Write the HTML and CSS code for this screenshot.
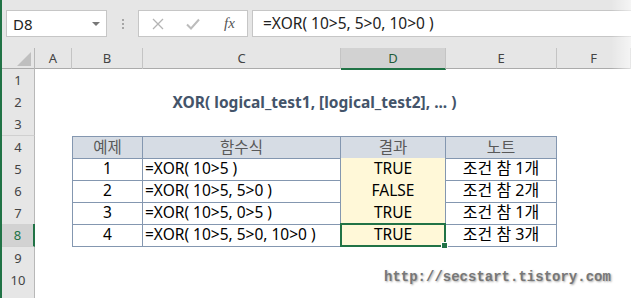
FILE: index.html
```html
<!DOCTYPE html>
<html lang="ko">
<head>
    <meta charset="UTF-8">
    <title>XOR 함수</title>
    <link rel="stylesheet" href="styles.css">
</head>
<body>
    <div class="app">
        <div class="topbar">
            <div class="namebox">
                <span>D8</span>
                <span class="caret"></span>
            </div>
            <div class="grip"><i></i><i></i><i></i></div>
            <div class="fbtns">
                <svg width="12" height="12" viewBox="0 0 12 12"><path d="M1 1L11 11M11 1L1 11" stroke="#b4b4b4" stroke-width="1.3" fill="none"/></svg>
                <svg width="14" height="12" viewBox="0 0 14 12"><path d="M1 6.5L5 10.5L13 1.5" stroke="#bcbcbc" stroke-width="2" fill="none"/></svg>
                <span class="fx">fx</span>
            </div>
            <div class="finput">=XOR( 10&gt;5, 5&gt;0, 10&gt;0 )</div>
        </div>

        <div class="sheet">
            <div class="row colhead">
                <div class="corner"><svg width="14" height="14" viewBox="0 0 14 14"><path d="M14 0L14 14L0 14Z" fill="#bfbfbf"/></svg></div>
                <div class="ch">A</div>
                <div class="ch">B</div>
                <div class="ch">C</div>
                <div class="ch sel">D</div>
                <div class="ch">E</div>
                <div class="ch">F</div>
            </div>
            <div class="row"><div class="rh">1</div></div>
            <div class="row">
                <div class="rh">2</div>
                <div></div>
                <div class="title">XOR( logical_test1, [logical_test2], ... )</div>
            </div>
            <div class="row"><div class="rh">3</div></div>
            <div class="row">
                <div class="rh">4</div>
                <div></div>
                <div class="c th first top">예제</div>
                <div class="c th top">함수식</div>
                <div class="c th top">결과</div>
                <div class="c th top">노트</div>
            </div>
            <div class="row">
                <div class="rh">5</div>
                <div></div>
                <div class="c first">1</div>
                <div class="c left">=XOR( 10&gt;5 )</div>
                <div class="c res">TRUE</div>
                <div class="c note">조건 참 1개</div>
            </div>
            <div class="row">
                <div class="rh">6</div>
                <div></div>
                <div class="c first">2</div>
                <div class="c left">=XOR( 10&gt;5, 5&gt;0 )</div>
                <div class="c res">FALSE</div>
                <div class="c note">조건 참 2개</div>
            </div>
            <div class="row">
                <div class="rh">7</div>
                <div></div>
                <div class="c first">3</div>
                <div class="c left">=XOR( 10&gt;5, 0&gt;5 )</div>
                <div class="c res">TRUE</div>
                <div class="c note">조건 참 1개</div>
            </div>
            <div class="row">
                <div class="rh sel">8</div>
                <div></div>
                <div class="c first">4</div>
                <div class="c left">=XOR( 10&gt;5, 5&gt;0, 10&gt;0 )</div>
                <div class="c res active">TRUE<span class="handle"></span></div>
                <div class="c note">조건 참 3개</div>
            </div>
            <div class="row"><div class="rh">9</div></div>
            <div class="row"><div class="rh">10</div></div>
            <div class="row"><div class="rh"></div></div>
        </div>

        <div class="watermark">http://secstart.tistory.com</div>
        <div class="fade"></div>
    </div>
</body>
</html>
```

FILE: styles.css
```css
html, body {
    margin: 0;
    padding: 0;
    background: #fff;
}
body {
    font-family: "Noto Sans", "Noto Sans CJK KR", sans-serif;
    color: #000;
    overflow: hidden;
}
.app {
    position: relative;
    width: 631px;
    height: 298px;
    border-left: 2px solid #217346;
    box-sizing: border-box;
    overflow: hidden;
}

/* formula bar */
.topbar {
    height: 48px;
    background: #e6e6e6;
    display: flex;
    align-items: flex-start;
    padding: 10px 0 0 4px;
    box-sizing: border-box;
}
.namebox {
    width: 101px;
    height: 27px;
    background: #fff;
    border: 1px solid #c6c6c6;
    box-sizing: border-box;
    display: flex;
    align-items: center;
    justify-content: space-between;
    padding: 0 6px 0 6px;
    font-size: 15px;
    color: #222;
}
.caret {
    width: 0;
    height: 0;
    border-left: 4px solid transparent;
    border-right: 4px solid transparent;
    border-top: 4px solid #777;
}
.grip {
    width: 31px;
    height: 27px;
    display: flex;
    flex-direction: column;
    align-items: center;
    justify-content: center;
    gap: 2px;
}
.grip i {
    width: 2px;
    height: 2px;
    background: #a6a6a6;
}
.fbtns {
    width: 110px;
    height: 27px;
    background: #fff;
    border: 1px solid #c6c6c6;
    box-sizing: border-box;
    display: flex;
    align-items: center;
    padding-left: 13px;
    gap: 22px;
}
.fx {
    font-family: "Liberation Serif", serif;
    font-style: italic;
    font-size: 15px;
    color: #555;
    margin-left: 2px;
}
.finput {
    flex: 1;
    margin-left: 4px;
    height: 27px;
    background: #fff;
    border: 1px solid #c6c6c6;
    border-right: none;
    box-sizing: border-box;
    padding-left: 10px;
    font-size: 15.5px;
    line-height: 25px;
    color: #222;
}

/* grid */
.row {
    display: grid;
    grid-template-columns: 33px 37px 71px 198px 105px 111px 1fr;
    height: 22.2px;
}
.colhead {
    height: 21px;
    background: #e6e6e6;
    border-bottom: 1px solid #ababab;
    box-sizing: border-box;
}
.corner {
    display: flex;
    align-items: flex-end;
    justify-content: flex-end;
    padding: 0 3px 3px 0;
    border-right: 1px solid #b8b8b8;
}
.ch {
    text-align: center;
    font-size: 13px;
    line-height: 20px;
    color: #444;
    border-right: 1px solid #c4c4c4;
}
.ch.sel {
    background: #d2d2d2;
    color: #1e5c38;
    border-bottom: 2px solid #217346;
    margin-bottom: -1px;
}
.rh {
    background: #e6e6e6;
    border-right: 1px solid #b8b8b8;
    border-bottom: 1px solid #d0d0d0;
    box-sizing: border-box;
    text-align: center;
    font-size: 13px;
    line-height: 22px;
    color: #444;
}
.rh.sel {
    background: #d2d2d2;
    color: #217346;
    border-right: 2px solid #217346;
}
.title {
    grid-column: 3 / 7;
    text-align: center;
    font-weight: bold;
    font-size: 15.5px;
    line-height: 22px;
    color: #44546a;
}

/* table */
.c {
    border-right: 1px solid #8497b0;
    border-bottom: 1px solid #8497b0;
    box-sizing: border-box;
    text-align: center;
    font-size: 15.5px;
    line-height: 21px;
    white-space: nowrap;
}
.c.first {
    border-left: 1px solid #8497b0;
}
.c.top {
    border-top: 1px solid #8497b0;
    line-height: 20px;
}
.c.th {
    background: #d6dce4;
    color: #595959;
}
.c.left {
    text-align: left;
    padding-left: 2px;
}
.c.note {
    font-size: 16px;
}
.c.res {
    background: #fff8d8;
}
.c.active {
    position: relative;
}
.c.active::after {
    content: "";
    position: absolute;
    left: -1px;
    top: -1px;
    right: -1px;
    bottom: -1px;
    border: 2px solid #217346;
}
.handle {
    position: absolute;
    right: -3px;
    bottom: -3px;
    width: 5px;
    height: 5px;
    background: #217346;
    border: 1px solid #fff;
    z-index: 1;
}

.watermark {
    position: absolute;
    left: 382px;
    top: 269px;
    font-family: "Liberation Mono", monospace;
    font-weight: bold;
    font-size: 14px;
    color: #777;
    text-shadow: 1px 1px 2px #aaa;
}
.fade {
    position: absolute;
    right: 0;
    top: 0;
    width: 20px;
    height: 298px;
    background: linear-gradient(to right, rgba(255,255,255,0), rgba(255,255,255,0.6));
}
```
